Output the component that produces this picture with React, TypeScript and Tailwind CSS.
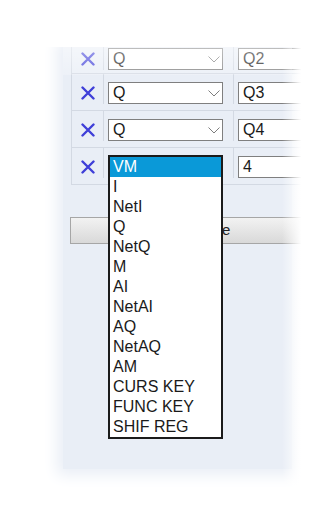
// Variable mapping panel with open select list
const options = [
  "VM",
  "I",
  "NetI",
  "Q",
  "NetQ",
  "M",
  "AI",
  "NetAI",
  "AQ",
  "NetAQ",
  "AM",
  "CURS KEY",
  "FUNC KEY",
  "SHIF REG",
];

const rows = [
  { type: "Q", name: "Q2" },
  { type: "Q", name: "Q3" },
  { type: "Q", name: "Q4" },
  { type: "VM", name: "4", open: true },
];

function RemoveIcon() {
  return (
    <svg width="14" height="14" viewBox="0 0 14 14" className="text-[#3f3fd8]">
      <path d="M1.5 1.5 L12.5 12.5 M12.5 1.5 L1.5 12.5" stroke="currentColor" strokeWidth="2.4" strokeLinecap="round" />
    </svg>
  );
}

function Chevron() {
  return (
    <svg width="12" height="7" viewBox="0 0 12 7">
      <path d="M0.5 0.5 L6 6 L11.5 0.5" fill="none" stroke="#7d7d7d" strokeWidth="1" />
    </svg>
  );
}

export default function App() {
  return (
    <div className="w-[325px] h-[515px] bg-white overflow-hidden relative font-['Liberation_Sans',Arial,sans-serif]">
      <div className="mt-[47px] h-[450px] overflow-hidden relative">
        <div className="ml-[63px] w-[229px] h-[422px] bg-[#e9eef6] shadow-[0_0_14px_6px_#e9eef6] relative">
          {/* table */}
          <div className="ml-[8px] w-[240px] border-l border-[#d3d9e3]">
            {rows.map((r, i) => (
              <div
                key={i}
                className={`flex border-b border-[#d3d9e3] ${i === 0 ? "h-[27px] pt-px" : "h-[37px] pt-[8px]"}`}
              >
                <div className="w-[31px] h-[22px] flex items-center justify-center border-r border-[#d3d9e3] -mt-[8px] pt-[8px] box-content">
                  <RemoveIcon />
                </div>
                <div className="w-[125px] relative border-r border-[#d3d9e3] -mt-[8px] pt-[8px] box-content h-[22px] pl-[4px]">
                  {r.open ? (
                    <div className="absolute left-[4px] top-[7px] w-[115px] border-2 border-[#1b1b1b] bg-white z-10">
                      {options.map((o, j) => (
                        <div
                          key={o}
                          className={`h-[20px] leading-[20px] text-[16px] pl-[3px] ${j === 0 ? "bg-[#0a99d8] text-white" : "text-[#1a1a1a]"}`}
                        >
                          {o}
                        </div>
                      ))}
                    </div>
                  ) : (
                    <div className="w-[115px] h-[22px] border border-[#7f7f7f] bg-white flex items-center justify-between pl-[4px] pr-[2px]">
                      <span className="text-[16px] text-[#1a1a1a]">{r.type}</span>
                      <Chevron />
                    </div>
                  )}
                </div>
                <div className="flex-1 pl-[4px]">
                  <div className="h-[22px] border border-[#7f7f7f] bg-white flex items-center pl-[4px] text-[16px] text-[#1a1a1a]">
                    {r.name}
                  </div>
                </div>
              </div>
            ))}
          </div>

          {/* action button */}
          <div className="ml-[7px] mt-[32px] w-[236px] h-[27px] border border-[#a6a6a6] bg-gradient-to-b from-[#f2f2f2] to-[#d9d9d9] flex items-center justify-center text-[15px] text-[#222]">
            Add Variable
          </div>

          {/* faded first row */}
          <div className="absolute left-0 top-0 w-full h-[28px] bg-gradient-to-b from-white/50 to-white/20 pointer-events-none" />
        </div>

        {/* right edge fade */}
        <div className="absolute top-0 left-[282px] w-[43px] h-full bg-gradient-to-r from-white/0 via-white to-white via-[45%] pointer-events-none" />
      </div>
    </div>
  );
}
